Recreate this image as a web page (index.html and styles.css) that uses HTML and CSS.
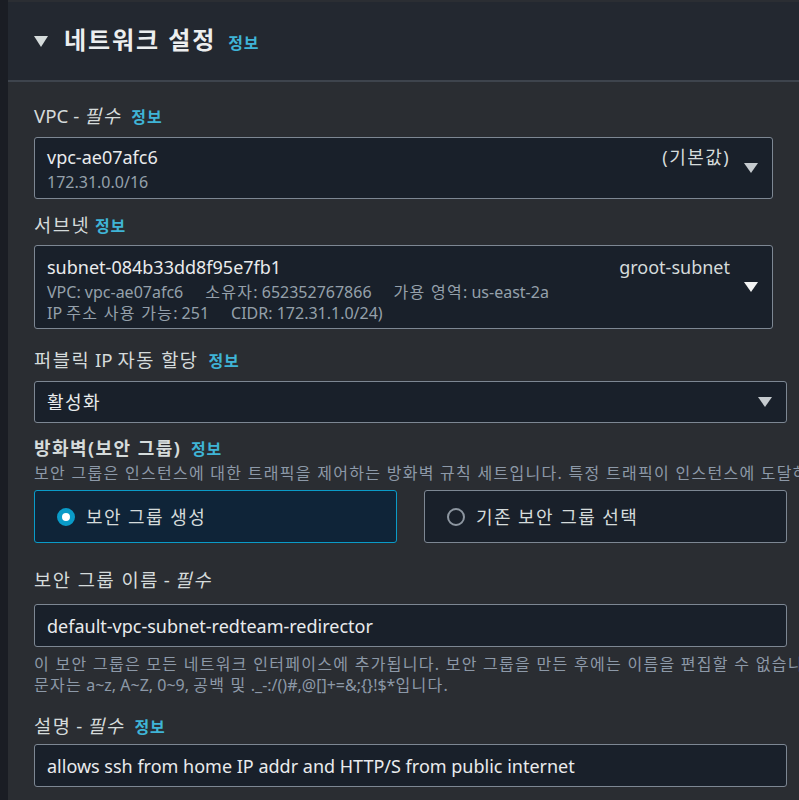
FILE: index.html
```html
<!DOCTYPE html>
<html lang="ko">
<head>
<meta charset="utf-8">
<title>네트워크 설정</title>
<link rel="stylesheet" href="styles.css">
</head>
<body>
<div class="rail"></div>
<section class="panel">
  <header class="panel-header">
    <span class="caret"></span>
    <h2 class="title k">네트워크 설정</h2>
    <a class="info info-title">정보</a>
  </header>
  <div class="panel-body">
    <div class="field f-vpc">
      <div class="label">VPC - <i class="k">필수</i> <a class="info info-wide">정보</a></div>
      <div class="select box-narrow">
        <div class="sel-content">
          <div class="row"><span class="main">vpc-ae07afc6</span><span class="tag k">(기본값)</span></div>
          <div class="sub">172.31.0.0/16</div>
        </div>
        <span class="arrow arrow-grey"></span>
      </div>
    </div>

    <div class="field f-subnet">
      <div class="label"><span class="k">서브넷</span> <a class="info">정보</a></div>
      <div class="select box-narrow subnet">
        <div class="sel-content">
          <div class="row"><span class="main">subnet-084b33dd8f95e7fb1</span><span class="tag">groot-subnet</span></div>
          <div class="sub"><span class="gap">VPC: vpc-ae07afc6</span><span class="gap"><span class="k">소유자</span>: 652352767866</span><span><span class="k">가용 영역</span>: us-east-2a</span></div>
          <div class="sub"><span class="gap">IP <span class="k">주소 사용 가능</span>: 251</span><span>CIDR: 172.31.1.0/24)</span></div>
        </div>
        <span class="arrow"></span>
      </div>
    </div>

    <div class="field f-public">
      <div class="label"><span class="k">퍼블릭</span> IP <span class="k">자동 할당</span> <a class="info info-wide">정보</a></div>
      <div class="select single">
        <div class="sel-content"><span class="main k">활성화</span></div>
        <span class="arrow arrow-grey"></span>
      </div>
    </div>

    <div class="field f-firewall">
      <div class="label strong"><span class="k">방화벽(보안 그룹)</span> <a class="info info-wide">정보</a></div>
      <div class="desc k">보안 그룹은 인스턴스에 대한 트래픽을 제어하는 방화벽 규칙 세트입니다. 특정 트래픽이 인스턴스에 도달하도록 허용하는 규칙을 추가합니다.</div>
      <div class="tiles">
        <div class="tile selected"><span class="radio on"></span><span class="k">보안 그룹 생성</span></div>
        <div class="tile"><span class="radio"></span><span class="k">기존 보안 그룹 선택</span></div>
      </div>
    </div>

    <div class="field f-name">
      <div class="label"><span class="k">보안 그룹 이름</span> - <i class="k">필수</i></div>
      <div class="input">default-vpc-subnet-redteam-redirector</div>
      <div class="help"><span class="k">이 보안 그룹은 모든 네트워크 인터페이스에 추가됩니다. 보안 그룹을 만든 후에는 이름을 편집할 수 없습니다. 최대 255자까지 입력할 수 있습니다. 유효한</span><br><span class="k">문자는</span> a~z, A~Z, 0~9, <span class="k">공백 및</span> ._-:/()#,@[]+=&amp;;{}!$*<span class="k">입니다.</span></div>
    </div>

    <div class="field f-desc">
      <div class="label"><span class="k">설명</span> - <i class="k">필수</i> <a class="info info-wide">정보</a></div>
      <div class="input">allows ssh from home IP addr and HTTP/S from public internet</div>
    </div>
  </div>
</section>
</body>
</html>
```
FILE: styles.css
```css
* { box-sizing: border-box; }
html, body { margin: 0; padding: 0; }
body {
  background: #1a1d24;
  width: 799px;
  height: 800px;
  overflow: hidden;
  display: flex;
  font-family: "Noto Sans", "Noto Sans CJK KR", sans-serif;
  color: #d5dbdb;
}
.k { letter-spacing: 0.08em; }
.rail { width: 8px; flex: none; background: #1a1d24; }
.panel {
  flex: 1;
  min-width: 0;
  background: #2a2d32;
  height: 800px;
}
.panel-header {
  height: 82px;
  background: #232830;
  border-top: 2px solid #2b2e33;
  border-bottom: 2px solid #3e444d;
  display: flex;
  align-items: center;
  padding-left: 26px;
}
.caret {
  width: 0; height: 0;
  border-left: 7px solid transparent;
  border-right: 7px solid transparent;
  border-top: 11px solid #d5dbdb;
  margin-right: 16px;
}
.title {
  margin: 0;
  font-size: 24px;
  line-height: 32px;
  font-weight: 700;
  color: #eceeef;
  margin-top: -2px;
}
.info {
  color: #3fb4d6;
  font-weight: 700;
  font-size: 16px;
  line-height: 1;
  font-style: normal;
  letter-spacing: 0.06em;
}
.info-title { margin-left: 12px; margin-top: 4px; }
.info-wide { margin-left: 5px; }
.panel-body {
  padding: 22px 0 0 26px;
}
.field { width: 753px; }
.label {
  font-size: 18.7px;
  line-height: 24px;
  height: 24px;
  color: #d5dbdb;
  white-space: nowrap;
}
.label i { font-style: italic; }
.label.strong { font-weight: 700; font-size: 18px; }
.select, .input {
  background: #19202a;
  border: 1px solid #7d8793;
  border-radius: 3px;
  display: flex;
  align-items: center;
}
.box-narrow { width: 739px; }
.sel-content { flex: 1; min-width: 0; }
.row { display: flex; justify-content: space-between; align-items: center; height: 24px; }
.main { font-size: 18px; line-height: 24px; color: #e9ebed; white-space: nowrap; }
.tag { font-size: 18px; line-height: 24px; color: #d5dbdb; white-space: nowrap; }
.sub { font-size: 16px; line-height: 21px; height: 21px; color: #95a0ab; white-space: nowrap; }
.gap { margin-right: 22px; }
.arrow {
  width: 0; height: 0;
  border-left: 7px solid transparent;
  border-right: 7px solid transparent;
  border-top: 10px solid #f2f3f3;
  margin-left: 14px;
  flex: none;
}
.arrow-grey { border-top-color: #c6cbcf; }

.f-vpc { margin-bottom: 14px; }
.f-vpc .select { margin-top: 9px; height: 62px; padding: 0 14px 0 12px; }
.f-vpc .sel-content { align-self: flex-start; padding-top: 7px; }
.f-vpc .row { margin-bottom: 3px; }

.f-subnet { margin-bottom: 19px; }
.f-subnet .select { margin-top: 8px; height: 84px; padding: 0 14px 0 12px; }
.f-subnet .sel-content { align-self: flex-start; padding-top: 9px; }
.f-subnet .row { margin-bottom: 3px; }

.f-public { margin-bottom: 13px; }
.f-public .select { margin-top: 9px; height: 42px; padding: 0 14px 0 12px; width: 753px; }

.f-firewall { margin-bottom: 25px; }
.desc {
  font-size: 16px;
  line-height: 26px;
  height: 26px;
  color: #8d99a8;
  white-space: nowrap;
}
.tiles {
  display: grid;
  grid-template-columns: 363px 363px;
  column-gap: 27px;
  margin-top: 4px;
}
.tile {
  height: 53px;
  background: #19202a;
  border: 1px solid #7d8793;
  border-radius: 3px;
  display: flex;
  align-items: center;
  padding-left: 22px;
  font-size: 18px;
  line-height: 24px;
  color: #d5dbdb;
  gap: 11px;
  white-space: nowrap;
}
.tile.selected {
  background: #0f2438;
  border-color: #0a9bc8;
}
.radio {
  width: 18px; height: 18px;
  border-radius: 50%;
  border: 2px solid #8d96a0;
  flex: none;
}
.radio.on {
  border: 5px solid #0a9bc8;
  background: #ffffff;
}

.f-name { margin-bottom: 18px; }
.f-name .input, .f-desc .input {
  height: 43px;
  padding: 0 12px;
  font-size: 18px;
  line-height: 24px;
  color: #e9ebed;
  white-space: nowrap;
}
.f-name .input { margin-top: 12px; }
.help {
  margin-top: 7px;
  font-size: 16px;
  line-height: 21px;
  height: 42px;
  color: #8d99a8;
  white-space: nowrap;
}
.f-desc .input { margin-top: 6px; }
```
